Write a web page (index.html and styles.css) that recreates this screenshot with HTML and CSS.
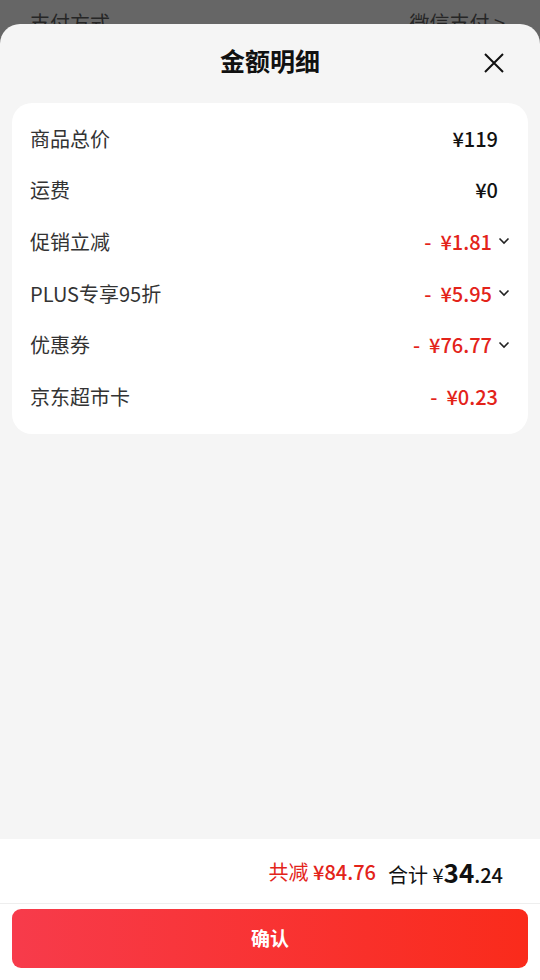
FILE: index.html
```html
<!DOCTYPE html>
<html lang="zh-CN">
<head>
    <meta charset="UTF-8">
    <meta name="viewport" content="width=device-width, initial-scale=1.0">
    <title>金额明细</title>
    <link rel="stylesheet" href="styles.css">
</head>
<body>

    <div class="backdrop">
        <span>支付方式</span>
        <span>微信支付 &gt;</span>
    </div>

    <section class="sheet">
        <header class="sheet-head">
            <h1>金额明细</h1>
            <svg class="close" width="20" height="20" viewBox="0 0 20 20">
                <path d="M1 1 L19 19 M19 1 L1 19" stroke="#111" stroke-width="2" fill="none"/>
            </svg>
        </header>

        <div class="card">
            <div class="row">
                <span class="label">商品总价</span>
                <span class="value">¥119</span>
            </div>
            <div class="row">
                <span class="label">运费</span>
                <span class="value">¥0</span>
            </div>
            <div class="row more">
                <span class="label">促销立减</span>
                <span class="value red"><i>-</i>¥1.81</span>
                <svg class="chev" width="12" height="8" viewBox="0 0 12 8"><path d="M1.5 1.5 L6 6 L10.5 1.5" stroke="#222" stroke-width="1.6" fill="none"/></svg>
            </div>
            <div class="row more">
                <span class="label">PLUS专享95折</span>
                <span class="value red"><i>-</i>¥5.95</span>
                <svg class="chev" width="12" height="8" viewBox="0 0 12 8"><path d="M1.5 1.5 L6 6 L10.5 1.5" stroke="#222" stroke-width="1.6" fill="none"/></svg>
            </div>
            <div class="row more">
                <span class="label">优惠券</span>
                <span class="value red"><i>-</i>¥76.77</span>
                <svg class="chev" width="12" height="8" viewBox="0 0 12 8"><path d="M1.5 1.5 L6 6 L10.5 1.5" stroke="#222" stroke-width="1.6" fill="none"/></svg>
            </div>
            <div class="row">
                <span class="label">京东超市卡</span>
                <span class="value red"><i>-</i>¥0.23</span>
            </div>
        </div>
    </section>

    <footer>
        <div class="summary">
            <span class="saved">共减 <b>¥84.76</b></span>
            <span class="total">合计 ¥<b class="big">34</b><b>.24</b></span>
        </div>
        <div class="actions">
            <button>确认</button>
        </div>
    </footer>

</body>
</html>
```

FILE: styles.css
```css
/* General */
html, body {
    height: 100%;
}

body {
    margin: 0;
    font-family: "Noto Sans CJK SC", "Noto Sans", sans-serif;
    color: #222;
    background: #666;
    display: flex;
    flex-direction: column;
    overflow: hidden;
}

/* Page behind the sheet */
.backdrop {
    height: 24px;
    flex: none;
    display: flex;
    justify-content: space-between;
    padding: 9px 35px 0 30px;
    box-sizing: border-box;
    overflow: hidden;
    font-size: 20px;
    line-height: 28px;
    color: #262626;
}

/* Sheet */
.sheet {
    flex: 1;
    background: #f5f5f5;
    border-radius: 20px 20px 0 0;
    padding: 0 12px;
}

.sheet-head {
    height: 79px;
    display: flex;
    align-items: center;
    justify-content: center;
    position: relative;
}

.sheet-head h1 {
    margin: 0 0 8px;
    font-size: 25px;
    line-height: 30px;
    font-weight: bold;
    color: #111;
}

.close {
    position: absolute;
    right: 24px;
    top: 29px;
}

/* Detail card */
.card {
    background: #fff;
    border-radius: 20px;
    padding: 11px 0 10px;
}

.row {
    height: 51.6px;
    display: flex;
    align-items: center;
    padding: 0 30px 3px 18px;
    box-sizing: border-box;
    font-size: 20px;
}

.row.more {
    padding-right: 18px;
}

.label {
    flex: 1;
    color: #333;
}

.value {
    color: #111;
    font-weight: 500;
}

.value.red {
    color: #e3231a;
}

.value i {
    font-style: normal;
    margin-right: 9px;
}

.chev {
    margin-left: 6px;
}

/* Footer */
footer {
    background: #fff;
    flex: none;
}

.summary {
    height: 65px;
    display: flex;
    justify-content: flex-end;
    align-items: center;
    gap: 12px;
    padding: 0 37px 0 0;
    box-sizing: border-box;
    font-size: 20px;
    border-bottom: 1px solid #eee;
}

.saved {
    color: #e3231a;
}

.saved b {
    font-weight: 500;
}

.total {
    color: #111;
}

.total b {
    font-weight: 500;
}

.total .big {
    font-size: 26px;
    font-weight: bold;
}

.actions {
    padding: 5px 12px 12px;
}

.actions button {
    display: block;
    width: 100%;
    height: 59px;
    padding: 0 0 3px;
    border: none;
    border-radius: 9px;
    background: linear-gradient(90deg, #f73b4b, #fa2b1b);
    color: #fff;
    font-family: inherit;
    font-size: 19px;
    font-weight: bold;
}
```
